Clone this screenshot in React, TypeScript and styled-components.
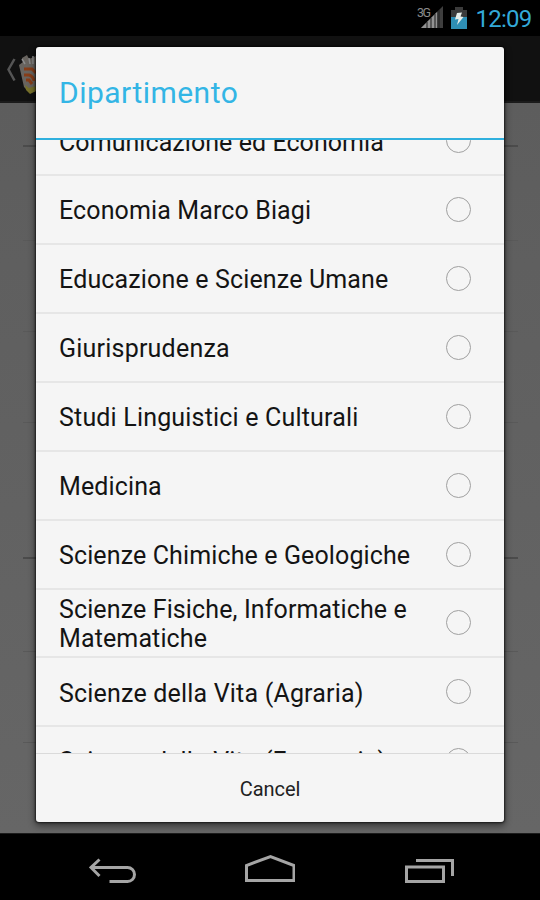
import React from "react";
import styled, { createGlobalStyle } from "styled-components";

const GlobalStyle = createGlobalStyle`
  * { box-sizing: border-box; }
  body { margin: 0; background: #000; font-family: Roboto, "Noto Sans", sans-serif; }
`;

const Screen = styled.div`
  position: relative;
  width: 540px;
  height: 900px;
  overflow: hidden;
  display: flex;
  flex-direction: column;
  background: #000;
`;

const StatusBar = styled.div`
  height: 36px;
  flex: none;
  display: flex;
  justify-content: flex-end;
  align-items: flex-start;
  padding-right: 9px;
`;

const Clock = styled.span`
  margin-left: 8px;
  color: #33a9d8;
  font-size: 24px;
  line-height: 38px;
  letter-spacing: -0.75px;
  margin-right: -0.5px;
`;

const ActionBar = styled.div`
  height: 67px;
  flex: none;
  background: #111;
  border-bottom: 2px solid #1b1b1b;
`;

const Form = styled.div`
  flex: 1;
  padding: 0 22px 0 23px;
  background: linear-gradient(#5d5d5d, #666);
`;

const FieldLine = styled.div<{ $height: number; $strong?: boolean }>`
  height: ${(p) => p.$height}px;
  border-bottom: ${(p) => (p.$strong ? "2px solid #4b4b4b" : "1px solid #595959")};
`;

const NavBar = styled.div`
  height: 67px;
  flex: none;
  display: flex;
  align-items: flex-start;
  border-top: 1px solid #1c1c1c;
`;

const Dialog = styled.div`
  position: absolute;
  left: 36px;
  top: 47px;
  width: 468px;
  height: 775px;
  display: flex;
  flex-direction: column;
  background: #f5f5f5;
  border-radius: 3px;
  box-shadow: 0 0 2px 1px rgba(0, 0, 0, 0.6), 0 3px 7px 1px rgba(0, 0, 0, 0.45);
  overflow: hidden;
`;

const Title = styled.h1`
  margin: 0;
  height: 92.5px;
  flex: none;
  padding-left: 23px;
  border-bottom: 2px solid #2fb0de;
  color: #33b5e5;
  font-size: 30px;
  font-weight: 400;
  line-height: 92px;
  letter-spacing: 0.47px;
`;

const List = styled.div`
  flex: 1;
  min-height: 0;
  overflow: hidden;
`;

const Rows = styled.div`
  margin-top: -32.1px;
`;

const Row = styled.div`
  height: 68.875px;
  display: flex;
  align-items: center;
  justify-content: space-between;
  padding: 0 33px 0 23px;
  border-bottom: 2px solid #e6e6e6;
`;

const Label = styled.span<{ $spacing: number }>`
  font-size: 25px;
  line-height: 29px;
  color: #141414;
  white-space: pre-line;
  letter-spacing: ${(p) => p.$spacing}px;
  padding-top: 2.4px;
`;

const Radio = styled.span`
  width: 25px;
  height: 25px;
  flex: none;
  border: 1.5px solid #a0a0a0;
  border-radius: 50%;
`;

const Cancel = styled.button`
  height: 69px;
  flex: none;
  border: 0;
  border-top: 1px solid #dadada;
  background: transparent;
  color: #222;
  font-family: inherit;
  font-size: 20px;
  letter-spacing: -0.05px;
  padding: 2px 0 0;
`;

const Icon = styled.svg<{ $left?: number; $top?: number }>`
  flex: none;
  display: block;
  margin-left: ${(p) => p.$left ?? 0}px;
  margin-top: ${(p) => p.$top ?? 0}px;
`;

const departments: { name: string; spacing: number }[] = [
  { name: "Comunicazione ed Economia", spacing: 0.06 },
  { name: "Economia Marco Biagi", spacing: 0.12 },
  { name: "Educazione e Scienze Umane", spacing: 0.15 },
  { name: "Giurisprudenza", spacing: 0.22 },
  { name: "Studi Linguistici e Culturali", spacing: 0.18 },
  { name: "Medicina", spacing: 0.12 },
  { name: "Scienze Chimiche e Geologiche", spacing: 0.12 },
  { name: "Scienze Fisiche, Informatiche e\nMatematiche", spacing: 0.12 },
  { name: "Scienze della Vita (Agraria)", spacing: 0.19 },
  { name: "Scienze della Vita (Farmacia)", spacing: 0.15 },
];

const Signal = () => (
  <Icon width="28" height="24" $top={5}>
    <text x="0" y="12" fontSize="12.5" fill="#8b8b8b" fontFamily="Roboto" textLength="14">3G</text>
    <path d="M26 1V23H4Z" fill="#3e3e3e" />
    <path d="M20 7V23H4Z" fill="#929292" />
    <path d="M10 17v6M14 13v10M18 9v14M22 5v18" stroke="#1c1c1c" strokeWidth="1" />
  </Icon>
);

const Battery = () => (
  <Icon width="16" height="23" $left={6} $top={6}>
    <path d="M4 1H12V4H16V23H0V4H4Z" fill="#3b3b3b" />
    <path d="M0 11H16V23H0Z" fill="#2e8fb5" />
    <path d="M6 7L11 6.500L9.500 10.500L12.500 11L6 19L7.500 13L4 13.500Z" fill="#e8eee9" />
  </Icon>
);

const BackAndLogo = () => (
  <Icon width="36" height="65" viewBox="0 0 36 65">
    <path d="M14.500 23L8.500 33.500L14.500 44.500" fill="none" stroke="#555" strokeWidth="2.5" />
    <path d="M19 29L23 26L22 22L27 19L29 23L36 20V55L30 57L24 51Z" fill="#68645f" />
    <path d="M22 23l3 5M29 22l1 6M33 20v8" stroke="#8b8b8b" strokeWidth="1.500" />
    <path d="M24 33H32L36 37M24 39H29Q33 40 34 45M26 44H29L32 48" fill="none" stroke="#873d18" strokeWidth="3" />
    <path d="M25 49L29 52L36 50V55L30 58L26 54Z" fill="#77712b" />
  </Icon>
);

export default function App() {
  return (
    <>
      <GlobalStyle />
      <Screen>
        <StatusBar>
          <Signal />
          <Battery />
          <Clock>12:09</Clock>
        </StatusBar>
        <ActionBar>
          <BackAndLogo />
        </ActionBar>
        <Form>
          <FieldLine $height={44} $strong />
          <FieldLine $height={94} />
          <FieldLine $height={91} />
          <FieldLine $height={91} />
          <FieldLine $height={136} $strong />
          <FieldLine $height={93} />
          <FieldLine $height={91} />
        </Form>
        <NavBar>
          <Icon width="50" height="30" $left={89} $top={19}>
            <path d="M11 7L2.500 15L11 23.500M3 15H39A7 7 0 0 1 39 29H21" transform="translate(-.5,-.5)" fill="none" stroke="#a5a5a5" strokeWidth="3" />
          </Icon>
          <Icon width="52" height="30" $left={104} $top={18}>
            <path d="M3.500 28.500V13.500L27.500 4.500L51 13.500V28.500Z" fill="none" stroke="#a5a5a5" strokeWidth="3" />
          </Icon>
          <Icon width="50" height="30" $left={109} $top={19}>
            <path d="M2.500 14H39.500V28.500H2.500ZM12 7.500H48.500V23" fill="none" stroke="#a5a5a5" strokeWidth="3" />
          </Icon>
        </NavBar>
        <Dialog role="dialog" aria-label="Dipartimento">
          <Title>Dipartimento</Title>
          <List>
            <Rows>
              {departments.map((d) => (
                <Row key={d.name}>
                  <Label $spacing={d.spacing}>{d.name}</Label>
                  <Radio />
                </Row>
              ))}
            </Rows>
          </List>
          <Cancel>Cancel</Cancel>
        </Dialog>
      </Screen>
    </>
  );
}
